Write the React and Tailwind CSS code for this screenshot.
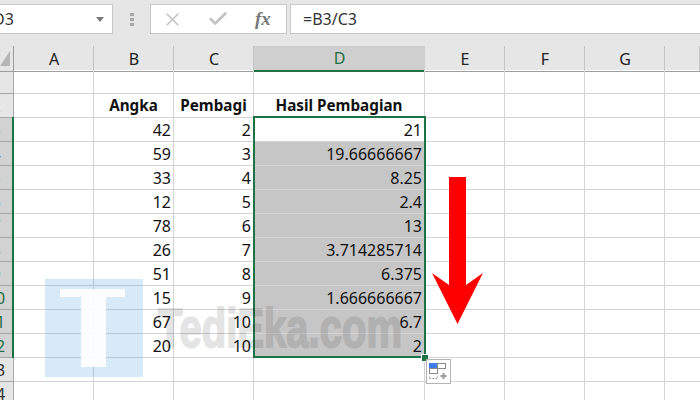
import { X, Check } from "lucide-react";

const columns = ["A", "B", "C", "D", "E", "F", "G", ""];

const rows = [
  { n: 1 },
  { n: 2, b: "Angka", c: "Pembagi", d: "Hasil Pembagian", head: true },
  { n: 3, b: "42", c: "2", d: "21" },
  { n: 4, b: "59", c: "3", d: "19.66666667" },
  { n: 5, b: "33", c: "4", d: "8.25" },
  { n: 6, b: "12", c: "5", d: "2.4" },
  { n: 7, b: "78", c: "6", d: "13" },
  { n: 8, b: "26", c: "7", d: "3.714285714" },
  { n: 9, b: "51", c: "8", d: "6.375" },
  { n: 10, b: "15", c: "9", d: "1.666666667" },
  { n: 11, b: "67", c: "10", d: "6.7" },
  { n: 12, b: "20", c: "10", d: "2" },
  { n: 13 },
  { n: 14 },
];

function Toolbar() {
  return (
    <div className="h-[46px] bg-[#e6e6e6] flex items-start pt-[4px]">
      <div className="w-[113px] h-[30px] bg-white border border-[#c8c8c8] border-l-0 flex items-center justify-between overflow-hidden text-[16px] text-[#333]">
        <span className="-ml-[7px]">D3</span>
        <span className="mr-[8px] w-0 h-0 border-x-[4px] border-x-transparent border-t-[5px] border-t-[#777]"></span>
      </div>
      <div className="w-[37px] h-[30px] flex flex-col items-center justify-center gap-[2px]">
        <span className="w-[4px] h-[3px] bg-[#a8a8a8]"></span>
        <span className="w-[4px] h-[3px] bg-[#a8a8a8]"></span>
        <span className="w-[4px] h-[3px] bg-[#a8a8a8]"></span>
      </div>
      <div className="w-[137px] h-[30px] bg-white border border-[#c8c8c8] flex items-center">
        <X size={21} strokeWidth={2} className="ml-[11px] text-[#c4c4c4]" />
        <Check size={22} strokeWidth={3} className="ml-[24px] text-[#c4c4c4]" />
        <span className="ml-[26px] font-['Liberation_Serif'] italic font-bold text-[19px] text-[#777]">fx</span>
      </div>
      <div className="ml-[3px] flex-1 h-[30px] bg-white border border-[#c8c8c8] border-r-0 flex items-center pl-[12px] text-[16px] text-[#333]">
        =B3/C3
      </div>
    </div>
  );
}

function ColumnHeaders() {
  return (
    <div className="grid grid-cols-[14px_80px_80px_80px_171px_80px_80px_80px_35px] h-[24px] bg-[#e6e6e6]">
      <div className="border-r border-b border-[#9e9e9e] relative overflow-hidden">
        <svg width="14" height="24" className="block">
          <polygon points="0,20 10,20 10,5" fill="#b6b6b6" />
        </svg>
      </div>
      {columns.map((col, i) =>
        col === "D" ? (
          <div key={i} className="bg-[#cfcfcf] border-b-2 border-[#1f7246] flex items-center justify-center text-[16px] text-[#1f6e43]">
            {col}
          </div>
        ) : (
          <div key={i} className="border-b border-[#9e9e9e] flex items-center justify-center text-[16px] text-[#222] shadow-[inset_-1px_0_0_#c4c4c4]">
            {col}
          </div>
        )
      )}
    </div>
  );
}

function Row({ row }) {
  const selected = row.n >= 3 && row.n <= 12;
  const base = "border-r border-b border-[#d4d4d4] flex items-center overflow-hidden whitespace-nowrap";
  const cell = row.head ? "justify-center font-bold text-[15.25px]" : "justify-end pr-[2px] pt-[1px]";
  const dBg = selected && row.n > 3 ? "bg-[#c6c6c6] border-[#aeaeae]" : "";

  return (
    <div className="grid grid-cols-[14px_80px_80px_80px_171px_80px_80px_80px_35px] h-[24px] text-[16px] text-[#111]">
      <div className={`overflow-hidden border-r border-b border-[#a6a6a6] flex items-center ${selected ? "bg-[#d2d2d2] text-[#1f6e43]" : "bg-[#e6e6e6] text-[#333]"}`}>
        <span className="shrink-0 w-[26px] -ml-[17px] text-center">{row.n}</span>
      </div>
      <div className={base}></div>
      <div className={`${base} ${cell}`}>{row.b}</div>
      <div className={`${base} ${cell}`}>{row.c}</div>
      <div className={`${base} ${cell} ${dBg}`}>{row.d}</div>
      <div className={base}></div>
      <div className={base}></div>
      <div className={base}></div>
      <div className="border-b border-[#d4d4d4]"></div>
    </div>
  );
}

export default function App() {
  return (
    <div className="relative w-[700px] h-[400px] overflow-hidden bg-white font-['Noto_Sans',sans-serif]">
      <Toolbar />
      <ColumnHeaders />
      {rows.map((row) => (
        <Row key={row.n} row={row} />
      ))}

      {/* green bar next to row headers */}
      <div className="absolute left-[12px] top-[117px] w-[2px] h-[241px] bg-[#1f7246]"></div>

      {/* selection */}
      <div className="absolute left-[253px] top-[116px] w-[173px] h-[242px] border-2 border-[#1f7246]"></div>
      <div className="absolute left-[422px] top-[355px] w-[6px] h-[6px] bg-[#1f7246] outline outline-1 outline-white"></div>

      {/* quick analysis button */}
      <div className="absolute left-[426px] top-[359px] w-[25px] h-[25px] bg-white border border-[#b4b4b4]">
        <svg width="23" height="23" className="block">
          <rect x="2.5" y="3.5" width="8" height="5" fill="#3d7df0" stroke="#3d7df0" />
          <rect x="10.5" y="3.5" width="8" height="5" fill="#fff" stroke="#8a8a8a" />
          <rect x="2.5" y="8.5" width="8" height="5" fill="#fff" stroke="#8a8a8a" />
          <path d="M2.5 16.5v1M10.5 16.5v1M2.5 18.5h8" stroke="#8a8a8a" strokeDasharray="1.5 1.5" fill="none" />
          <path d="M16.5 13v6M13.5 16h6" stroke="#9a9a9a" strokeWidth="2" fill="none" />
        </svg>
      </div>

      {/* arrow */}
      <svg width="60" height="155" className="absolute left-[430px] top-[175px]">
        <polygon points="19,2 36,2 36,110 53,98 27.5,149 2,98 19,110" fill="#ff0000" />
      </svg>

      {/* watermark */}
      <svg width="98" height="98" className="absolute left-[45px] top-[279px]">
        <rect width="98" height="98" fill="#3b8fd6" fillOpacity="0.2" />
        <polygon points="15,10 80,10 80,18 61,18 61,88 36,88 36,18 15,18" fill="#ffffff" fillOpacity="0.9" />
      </svg>
      <div className="absolute left-[158px] top-[296px] origin-left scale-x-[0.715] font-['Liberation_Sans',sans-serif] font-bold text-[56px] leading-[64px] text-black opacity-10 [-webkit-text-stroke:2px_black] whitespace-nowrap">
        TediEka.com
      </div>
    </div>
  );
}
